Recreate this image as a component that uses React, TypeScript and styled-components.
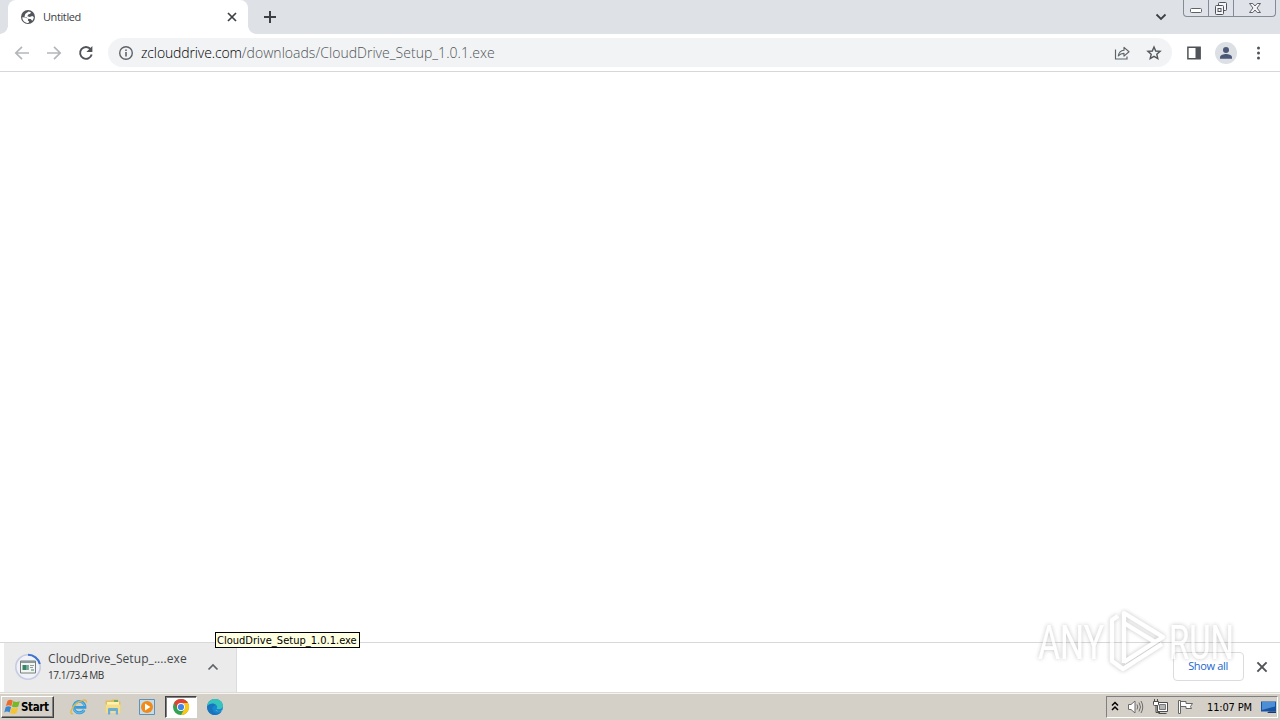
import * as React from "react";
import styled, { createGlobalStyle } from "styled-components";

const GlobalStyle = createGlobalStyle`
  * {
    box-sizing: border-box;
  }
  body {
    margin: 0;
    overflow: hidden;
    background: #fff;
    font-family: "DejaVu Sans Condensed", "DejaVu Sans", sans-serif;
  }
  svg {
    display: block;
    flex: none;
  }
`;

const Desktop = styled.div`
  display: flex;
  flex-direction: column;
  position: relative;
  width: 1280px;
  height: 720px;
  overflow: hidden;
`;

const TabStrip = styled.div`
  display: flex;
  height: 34px;
  padding-left: 8px;
  background: #dee1e6;
`;

const Tab = styled.div`
  display: flex;
  align-items: center;
  position: relative;
  width: 240px;
  height: 34px;
  padding: 0 9px 0 12px;
  background: #fff;
  border-radius: 8px 8px 0 0;

  &::before,
  &::after {
    content: "";
    position: absolute;
    bottom: 0;
    width: 8px;
    height: 8px;
  }
  &::before {
    left: -8px;
    background: radial-gradient(circle at 0 0, #dee1e6 7.5px, #fff 8px);
  }
  &::after {
    right: -8px;
    background: radial-gradient(circle at 100% 0, #dee1e6 7.5px, #fff 8px);
  }
`;

const TabTitle = styled.span`
  flex: 1;
  margin-left: 7px;
  font-family: "Open Sans", sans-serif;
  font-size: 11px;
  line-height: 16px;
  letter-spacing: -0.4px;
  color: #3c4043;
`;

const NewTab = styled.div`
  flex: 1;
  padding: 9px 0 0 14px;
`;

const TabSearch = styled.div`
  padding: 9px 14px 0 0;
`;

const WindowControls = styled.div`
  display: flex;
  width: 93px;
  height: 17px;
  margin-right: 4px;
  background: #dfe2e8;
  border: 1px solid #858b96;
  border-top: none;
  border-radius: 0 0 4px 4px;
`;

const WindowButton = styled.div<{ $width: number }>`
  display: flex;
  justify-content: center;
  width: ${({ $width }) => $width}px;

  & + & {
    border-left: 1px solid #858b96;
  }
`;

const Toolbar = styled.div`
  display: flex;
  align-items: center;
  height: 38px;
  padding: 0 14px;
  background: #fff;
  border-bottom: 1px solid #d5d7da;
`;

const NavButtons = styled.div`
  display: flex;
  gap: 16px;
  width: 94px;
`;

const AddressBar = styled.div`
  display: flex;
  align-items: center;
  width: 1064px;
  height: 29px;
  padding: 0 10px;
  background: #f1f3f4;
  border-radius: 15px;
`;

const Url = styled.span`
  flex: 1;
  margin-left: 7px;
  font-family: "Open Sans", sans-serif;
  font-size: 14px;
  font-weight: 300;
  line-height: 20px;
  letter-spacing: 0.03px;
  color: #505458;
`;

const Host = styled.span`
  letter-spacing: -0.13px;
  color: #000;
`;

const AddressActions = styled.div`
  display: flex;
  gap: 16px;
`;

const ToolbarActions = styled.div`
  display: flex;
  align-items: center;
  gap: 13px;
  margin-left: 14px;
`;

const Page = styled.div`
  flex: 1;
  background: #fff;
`;

const Shelf = styled.div`
  display: flex;
  height: 50px;
  padding-left: 4px;
  background: #fff;
  border-top: 1px solid #d6d8da;
`;

const Download = styled.div`
  display: flex;
  width: 233px;
  padding: 0 17px 0 10px;
  background: #ebebeb;
  border-right: 1px solid #dadce0;
`;

const DownloadIcon = styled.div`
  padding-top: 10px;
`;

const DownloadText = styled.div`
  flex: 1;
  margin: 7px 0 0 6px;
  white-space: nowrap;
`;

const FileName = styled.div`
  font-family: "Open Sans", sans-serif;
  font-size: 12px;
  line-height: 17px;
  letter-spacing: 0.07px;
  color: #45484c;
`;

const Progress = styled.div`
  font-family: "Open Sans", sans-serif;
  font-size: 10px;
  line-height: 16px;
  letter-spacing: -0.45px;
  color: #333;
`;

const Chevron = styled.div`
  padding-top: 18px;
`;

const ShelfActions = styled.div`
  display: flex;
  align-items: center;
  gap: 10px;
  margin-left: auto;
  padding: 0 10px 2px 0;
`;

const ShowAll = styled.button`
  width: 71px;
  height: 29px;
  padding: 0 1px 2px 0;
  background: #fff;
  border: 1px solid #dadce0;
  border-radius: 4px;
  font-family: "Open Sans", sans-serif;
  font-size: 11px;
  letter-spacing: -0.35px;
  color: #1a66cf;
`;

const Tooltip = styled.div`
  position: absolute;
  left: 215px;
  top: 632px;
  width: 145px;
  height: 16px;
  padding-left: 1px;
  background: #ffffe1;
  border: 1px solid #000;
  font-size: 11px;
  line-height: 15px;
  letter-spacing: 0.02px;
  color: #000;
  white-space: nowrap;
`;

const Taskbar = styled.div`
  display: flex;
  align-items: center;
  height: 28px;
  padding: 2px 1px 1px 1px;
  background: #d4d0c8;
  border-top: 1px solid #dedbd5;
  box-shadow: inset 0 1px #f5f4f1;
`;

const StartButton = styled.div`
  display: flex;
  align-items: center;
  width: 53px;
  height: 22px;
  padding-left: 2px;
  background: #d4d0c8;
  border: 1px solid;
  border-color: #fff #404040 #404040 #fff;
  box-shadow: inset -1px -1px #808080;
  font-size: 11.5px;
  font-weight: 700;
  letter-spacing: -0.35px;
  color: #000;
`;

const QuickLaunch = styled.div`
  display: flex;
  margin-left: 8px;
`;

const TaskButton = styled.div<{ $active?: boolean }>`
  display: flex;
  align-items: center;
  justify-content: center;
  width: ${({ $active }) => ($active ? 32 : 34)}px;
  height: 22px;
  margin: ${({ $active }) => ($active ? "0 1px" : "0")};
  background: ${({ $active }) => ($active ? "#fff" : "transparent")};
  border: ${({ $active }) => ($active ? "1px solid" : "none")};
  border-color: #404040 #fff #fff #404040;
  box-shadow: ${({ $active }) => ($active ? "inset 1px 1px #808080" : "none")};
`;

const Tray = styled.div`
  display: flex;
  align-items: center;
  width: 172px;
  height: 22px;
  margin: 0 1px 0 auto;
  padding-left: 4px;
  border: 1px solid;
  border-color: #808080 #fff #fff #808080;
`;

const TrayIcons = styled.div`
  display: flex;
  align-items: center;
  gap: 8px;
`;

const Clock = styled.span`
  flex: 1;
  padding-left: 13px;
  font-size: 11px;
  letter-spacing: -0.15px;
  color: #000;
  white-space: nowrap;
`;

const Watermark = styled.div`
  position: absolute;
  left: 1030px;
  top: 602px;
`;

const Globe = () => (
  <svg width="16" height="16" viewBox="0 0 16 16">
    <circle cx="8" cy="8" r="7" fill="#53565b" />
    <path d="M2.3 8.2 6 8.6l2.2 1.6-.4 1.4 1.3.8-.6 1.6C5 14.1 2.3 11.6 2.3 8.2zM8.6 2.6 11 3.3l-.8 1.5-2 .6-.8 1.9 2.4.7 2.4-.9 1.6.8c-.1 1.5-.7 2.8-1.6 3.8l-1.5-1.6-3.1-.3-1-1.6-2.2-.5 1-2.9z" fill="#fff" />
  </svg>
);

const Cross = ({ size, color }: { size: number; color: string }) => (
  <svg width={size} height={size} viewBox="0 0 14 14">
    <path d="m3 3 8 8M11 3l-8 8" stroke={color} strokeWidth="1.7" />
  </svg>
);

const Arrow = ({ flip }: { flip?: boolean }) => (
  <svg width="16" height="16" viewBox="0 0 16 16">
    <path
      d="M15 8H2M8 1.8 1.8 8 8 14.2"
      fill="none"
      stroke="#b4b7ba"
      strokeWidth="1.7"
      transform={flip ? "rotate(180 8 8)" : undefined}
    />
  </svg>
);

const Reload = () => (
  <svg width="16" height="16" viewBox="0 0 16 16">
    <path d="M12.6 4.2A5.9 5.9 0 1 0 13.7 9.5" fill="none" stroke="#505357" strokeWidth="1.9" />
    <path d="M14.4 1v6H8.4z" fill="#505357" />
  </svg>
);

const Info = () => (
  <svg width="16" height="16" viewBox="0 0 16 16">
    <circle cx="8" cy="8" r="6.3" fill="none" stroke="#5f6368" strokeWidth="1.4" />
    <path d="M8 7v4.5M8 4.4V6" stroke="#5f6368" strokeWidth="1.6" />
  </svg>
);

const Share = () => (
  <svg width="16" height="16" viewBox="0 0 16 16" fill="none" stroke="#5f6368" strokeWidth="1.15">
    <path d="M1.5 4.5v9.5h11.5v-2.5" />
    <path d="M4.3 11C4.8 7.4 7 5.4 10 5.2V2.4L15 6.8l-5 4.3V8.4C7.6 8.4 5.8 9.2 4.3 11z" strokeLinejoin="round" />
  </svg>
);

const Star = () => (
  <svg width="16" height="16" viewBox="0 0 16 16">
    <path
      d="m8 2 1.7 4 4.4.4-3.3 2.9 1 4.3L8 11.3l-3.8 2.3 1-4.3-3.3-2.9L6.3 6z"
      fill="none"
      stroke="#53565b"
      strokeWidth="1.4"
    />
  </svg>
);

const SidePanel = () => (
  <svg width="16" height="16" viewBox="0 0 16 16">
    <path d="M1.9 2.2h12.2v11.6H1.9z" fill="none" stroke="#505357" strokeWidth="1.5" />
    <path d="M9.5 2h4.8v12H9.5z" fill="#505357" />
  </svg>
);

const Avatar = () => (
  <svg width="22" height="22" viewBox="0 0 22 22">
    <circle cx="11" cy="11" r="11" fill="#dce0e5" />
    <circle cx="11" cy="8" r="3" fill="#4c5878" />
    <path d="M5 16.7v-1.4c0-2.3 3.8-3.3 6-3.3s6 1 6 3.3v1.4z" fill="#4c5878" />
  </svg>
);

const Kebab = () => (
  <svg width="16" height="16" viewBox="0 0 16 16" fill="#505357">
    <circle cx="8.5" cy="3" r="1.5" />
    <circle cx="8.5" cy="8" r="1.5" />
    <circle cx="8.5" cy="13" r="1.5" />
  </svg>
);

const Installer = () => (
  <svg width="28" height="28" viewBox="0 0 28 28">
    <circle cx="14" cy="14" r="12.2" fill="#f0f2f7" stroke="#c5cbe2" strokeWidth="1.6" />
    <path d="M14 1.8A12.2 12.2 0 0 1 25.8 11" fill="none" stroke="#3f72cf" strokeWidth="2" />
    <path d="M6.5 8h15v12h-15z" fill="#f3f5f2" stroke="#777e7c" />
    <path d="M7 8h14v2H7z" fill="#8d9a99" />
    <path d="M8.5 12h6v5h-6z" fill="#34856b" />
    <path d="M12 12h2.5v5H12z" fill="#74a994" />
    <path d="M16 12.5h4M16 14.5h3" stroke="#939b99" />
    <path d="M17 17h3" stroke="#3f817c" />
  </svg>
);

const WindowsFlag = () => (
  <svg width="17" height="16" viewBox="0 0 17 16">
    <path d="M3.6 1.7c2-1.4 3.6-1.1 5.2 0L7.3 7.2c-1.6-1.1-3.3-1.3-5.4-.1z" fill="#ed6b2d" />
    <path d="M9.4 2.1c2 1.2 4 1.2 6.4 0l-1.5 5.4c-2.3 1.2-4.4 1.1-6.4-.1z" fill="#79b729" />
    <path d="M1.7 8c2.1-1.3 3.8-1 5.4.1l-1.5 5.4c-1.6-1.1-3.3-1.3-5.4-.1z" fill="#3b87cf" />
    <path d="M7.7 8.6c2 1.2 4.1 1.2 6.4 0L12.6 14c-2.3 1.2-4.4 1.1-6.4-.1z" fill="#f5c431" />
  </svg>
);

const InternetExplorer = () => (
  <svg width="18" height="18" viewBox="0 0 18 18" fill="none">
    <path d="M14.2 12A5.7 5.7 0 1 1 15 9.4H5.2" stroke="#359bd9" strokeWidth="2.8" />
    <path d="M14.2 12A5.7 5.7 0 1 1 14.7 8" stroke="#7ccdf0" strokeWidth=".8" />
    <path d="M3 15.5C-.5 17 .3 11 5.5 6.3S17.7.3 16.2 4.7" stroke="#e4b745" strokeWidth="1.4" />
  </svg>
);

const Explorer = () => (
  <svg width="18" height="18" viewBox="0 0 18 18">
    <path d="M1.5 2.5H7l1-1h6v2h2.5V15h-15z" fill="#e0bd5d" />
    <path d="M3 4h12v8H3z" fill="#fff2ac" />
    <path d="M1.5 6.5h15V15h-15z" fill="#f4dd8a" />
    <path d="M4 16.5V11q0-1 1-1h8q1 0 1 1v5.5h-2.2v-3.5H6.2v3.5z" fill="#69add8" />
    <path d="M10 3h4" stroke="#56a569" strokeWidth="1.5" />
  </svg>
);

const MediaPlayer = () => (
  <svg width="18" height="18" viewBox="0 0 18 18">
    <path d="M1.5 1.5h15v15h-15z" fill="#c4ddec" stroke="#6291b7" />
    <circle cx="9" cy="9" r="6" fill="#f18a18" />
    <path d="m7 5.4 5.4 3.6L7 12.6z" fill="#fff" />
  </svg>
);

const Chrome = () => (
  <svg width="18" height="18" viewBox="0 0 18 18">
    <circle cx="9" cy="9" r="8" fill="#34a253" />
    <path d="M2.1 5A8 8 0 0 1 16 5H9a4 4 0 0 0-3.5 6z" fill="#e34134" />
    <path d="M16 5a8 8 0 0 1-7 12l3.5-6A4 4 0 0 0 12 6.3L11 5z" fill="#fbc816" />
    <circle cx="9" cy="9" r="4" fill="#fff" />
    <circle cx="9" cy="9" r="3.1" fill="#4285e8" />
  </svg>
);

const Edge = () => (
  <svg width="18" height="18" viewBox="0 0 18 18">
    <circle cx="9" cy="9" r="8" fill="#1686d0" />
    <path d="M1.2 8C2 3.5 5.3 1 9 1c4.8 0 8 3.2 8 6.8 0 3-3.8 4.2-6.5 2.8 1.6-2 0-4.3-2.5-4.3C5 6.3 2.3 7.2 1.2 8z" fill="#35c4bd" />
    <path d="M1.1 8.5C3 5.4 8 4.2 10 7.2c-3-.5-5 3-2.6 6.2 1.5 2 4.5 2.6 7.4 1.2C9.5 19.5 1 16.5 1.1 8.5z" fill="#1874bd" />
    <path d="M9.2 8c-1.5 1.8-.2 4.7 2.6 5.2 1.6.3 3.1-.2 4.4-1l.3.6c-4.7 1.7-9.9-1.4-7.3-4.8z" fill="#d4d0c8" />
  </svg>
);

const Speaker = () => (
  <svg width="17" height="16" viewBox="0 0 17 16" fill="none" stroke="#6c6c6c">
    <path d="M1.5 5.5H4L8 2v12l-4-3.5H1.5z" fill="#fff" />
    <path d="M10 5.5q1.5 2.5 0 5M12 3.5q3 4.5 0 9M14 2q3.5 6 0 12" />
  </svg>
);

const Network = () => (
  <svg width="17" height="16" viewBox="0 0 17 16" fill="none" stroke="#4d4d4d">
    <path d="M5.5 3.5h10v9h-10z" fill="#fff" />
    <path d="M7.5 5.5h6v5h-6z" fill="#b5b5b5" stroke="#777" />
    <path d="M6.5 14.5h8M4 7v6.5h4" />
    <path d="M1.5 2.5h5v3q0 1-1 1h-3q-1 0-1-1z" fill="#fff" />
    <path d="M2.5 0v2.5M5.5 0v2.5" />
  </svg>
);

const Flag = () => (
  <svg width="17" height="16" viewBox="0 0 17 16">
    <path d="M3.5 2.5H9v2h6.5l-2 3 1 2H9v-2H3.5z" fill="#fff" stroke="#666" />
    <path d="M1.5 1.5h2v13h-2z" fill="#fff" stroke="#666" />
  </svg>
);

const ShowDesktop = () => (
  <svg width="17" height="14" viewBox="0 0 17 14">
    <path d="M1 1.5h15v10H1z" fill="#1753a3" />
    <path d="M2 2h13v4.5L2 10z" fill="#4c8fd6" />
    <path d="M9 11.5h7v1.5H7z" fill="#153a70" />
  </svg>
);

const AnyRun = () => (
  <svg width="212" height="76" viewBox="0 0 212 76">
    <defs>
      <filter id="halo" x="-10%" y="-20%" width="120%" height="140%">
        <feDropShadow dx="0" dy="0" stdDeviation="2" floodColor="#777" floodOpacity=".7" />
      </filter>
    </defs>
    <g filter="url(#halo)" opacity=".65" fill="#fff" fontFamily="Roboto, sans-serif" fontSize="49">
      <text x="8" y="57" textLength="66" lengthAdjust="spacingAndGlyphs">ANY</text>
      <text x="139" y="57" textLength="65" lengthAdjust="spacingAndGlyphs">RUN</text>
      <g fill="none" stroke="#fff" strokeWidth="4.2" strokeLinejoin="round">
        <path d="M88 14l-6 4v41l11 8 39-25" />
        <path d="M94 61V11l39 24-39 25" />
        <path d="M94 21l31 19" />
      </g>
    </g>
  </svg>
);

const App = () => {
  return (
    <Desktop>
      <GlobalStyle />
      <TabStrip>
        <Tab>
          <Globe />
          <TabTitle>Untitled</TabTitle>
          <Cross size={14} color="#3c4043" />
        </Tab>
        <NewTab>
          <svg width="16" height="16" viewBox="0 0 16 16">
            <path d="M8 2v12M2 8h12" stroke="#3c4043" strokeWidth="2" />
          </svg>
        </NewTab>
        <TabSearch>
          <svg width="16" height="16" viewBox="0 0 16 16">
            <path d="m3.5 5.5 4.5 4.5 4.5-4.5" fill="none" stroke="#3c4043" strokeWidth="1.8" />
          </svg>
        </TabSearch>
        <WindowControls>
          <WindowButton $width={24}>
            <svg width="20" height="16" viewBox="0 0 20 16">
              <rect x="4.5" y="8.5" width="11" height="4" rx="1" fill="#fff" stroke="#5d626b" />
            </svg>
          </WindowButton>
          <WindowButton $width={25}>
            <svg width="20" height="16" viewBox="0 0 20 16" fill="#f5f5f7" stroke="#4d525b">
              <rect x="7.5" y="2.5" width="8" height="8" rx="1" />
              <rect x="4.5" y="5.5" width="8" height="9" rx="1" />
              <rect x="7" y="8.5" width="3" height="3" />
            </svg>
          </WindowButton>
          <WindowButton $width={42}>
            <svg width="20" height="16" viewBox="0 0 20 16">
              <path d="M4.5 3.5h3.3L10 6l2.2-2.5h3.3L12 8l3.5 4.5h-3.3L10 10l-2.2 2.5H4.5L8 8z" fill="#f5f5f7" stroke="#5d626b" />
            </svg>
          </WindowButton>
        </WindowControls>
      </TabStrip>
      <Toolbar>
        <NavButtons>
          <Arrow />
          <Arrow flip />
          <Reload />
        </NavButtons>
        <AddressBar>
          <Info />
          <Url>
            <Host>zclouddrive.com</Host>/downloads/CloudDrive_Setup_1.0.1.exe
          </Url>
          <AddressActions>
            <Share />
            <Star />
          </AddressActions>
        </AddressBar>
        <ToolbarActions>
          <SidePanel />
          <Avatar />
          <Kebab />
        </ToolbarActions>
      </Toolbar>
      <Page />
      <Shelf>
        <Download>
          <DownloadIcon>
            <Installer />
          </DownloadIcon>
          <DownloadText>
            <FileName>CloudDrive_Setup_....exe</FileName>
            <Progress>17.1/73.4 MB</Progress>
          </DownloadText>
          <Chevron>
            <svg width="12" height="12" viewBox="0 0 12 12">
              <path d="m1.5 8.5 4.5-4.5 4.5 4.5" fill="none" stroke="#5f6368" strokeWidth="1.7" />
            </svg>
          </Chevron>
        </Download>
        <ShelfActions>
          <ShowAll>Show all</ShowAll>
          <Cross size={16} color="#505357" />
        </ShelfActions>
      </Shelf>
      <Taskbar>
        <StartButton>
          <WindowsFlag />
          Start
        </StartButton>
        <QuickLaunch>
          <TaskButton>
            <InternetExplorer />
          </TaskButton>
          <TaskButton>
            <Explorer />
          </TaskButton>
          <TaskButton>
            <MediaPlayer />
          </TaskButton>
          <TaskButton $active>
            <Chrome />
          </TaskButton>
          <TaskButton>
            <Edge />
          </TaskButton>
        </QuickLaunch>
        <Tray>
          <TrayIcons>
            <svg width="8" height="14" viewBox="0 0 8 14">
              <path d="m1 5.5 3-3 3 3M1 10l3-3 3 3" fill="none" stroke="#000" strokeWidth="1.5" />
            </svg>
            <Speaker />
            <Network />
            <Flag />
          </TrayIcons>
          <Clock>11:07 PM</Clock>
          <ShowDesktop />
        </Tray>
      </Taskbar>
      <Tooltip>CloudDrive_Setup_1.0.1.exe</Tooltip>
      <Watermark>
        <AnyRun />
      </Watermark>
    </Desktop>
  );
};

export default App;
